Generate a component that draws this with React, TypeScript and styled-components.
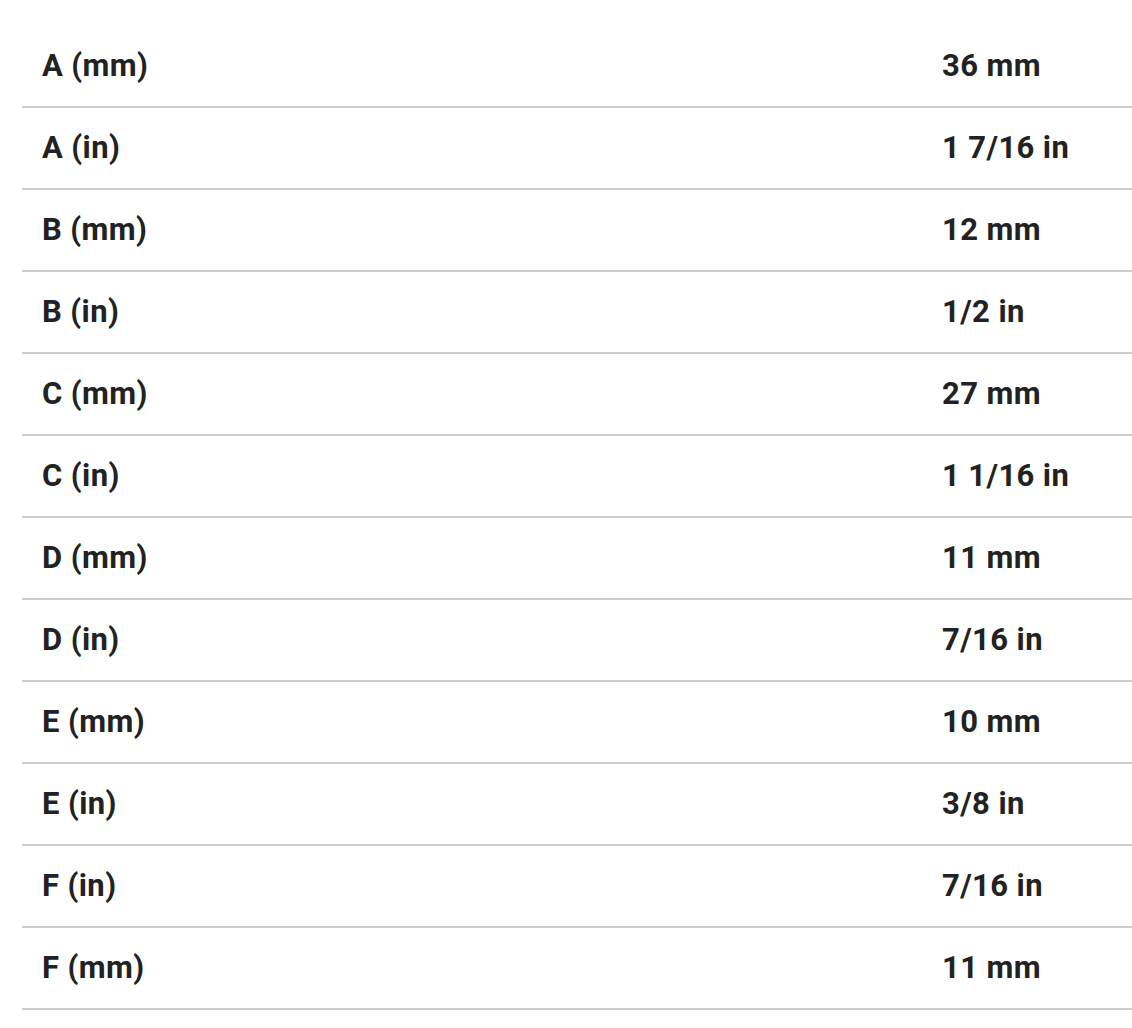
import React from 'react';
import styled, { createGlobalStyle } from 'styled-components';

const rows: [string, string][] = [
  ['A (mm)', '36 mm'],
  ['A (in)', '1 7/16 in'],
  ['B (mm)', '12 mm'],
  ['B (in)', '1/2 in'],
  ['C (mm)', '27 mm'],
  ['C (in)', '1 1/16 in'],
  ['D (mm)', '11 mm'],
  ['D (in)', '7/16 in'],
  ['E (mm)', '10 mm'],
  ['E (in)', '3/8 in'],
  ['F (in)', '7/16 in'],
  ['F (mm)', '11 mm'],
];

const GlobalStyle = createGlobalStyle`
  html, body {
    margin: 0;
    padding: 0;
    background: #fff;
    overflow: hidden;
  }
`;

const Page = styled.div`
  padding: 26px 0 0 22px;
  font-family: Roboto, 'Liberation Sans', sans-serif;
`;

const SpecTable = styled.div`
  display: flex;
  flex-direction: column;
`;

const Row = styled.div`
  display: grid;
  grid-template-columns: 900px 1fr;
  height: 80px;
  align-items: center;
  border-bottom: 2px solid #cccccc;
`;

const Cell = styled.div`
  padding: 0 20px 2px;
  font-size: 31px;
  font-weight: 700;
  letter-spacing: 0.4px;
  color: #222222;
  white-space: nowrap;
`;

const App: React.FC = () => (
  <Page>
    <GlobalStyle />
    <SpecTable>
      {rows.map(([label, value]) => (
        <Row key={label}>
          <Cell>{label}</Cell>
          <Cell>{value}</Cell>
        </Row>
      ))}
    </SpecTable>
  </Page>
);

export default App;
